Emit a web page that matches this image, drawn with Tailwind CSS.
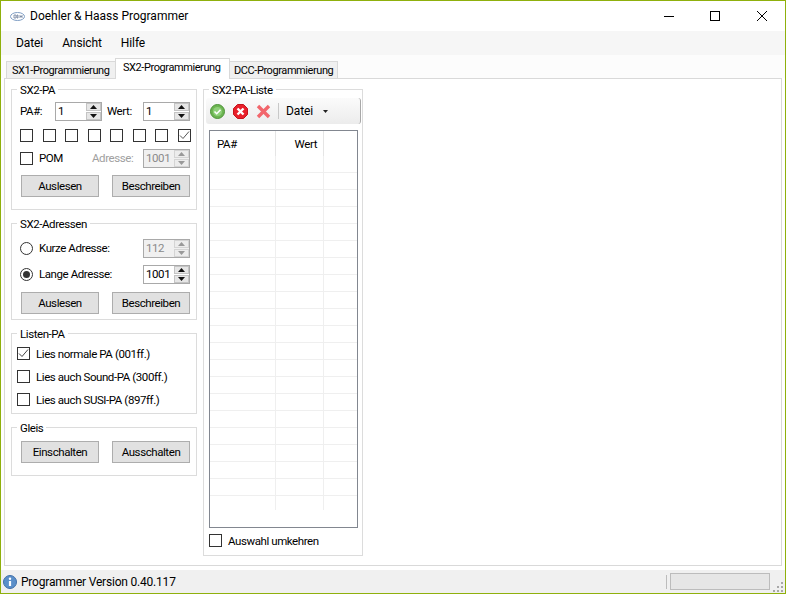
<!DOCTYPE html>
<html lang="en">
<head>
  <meta charset="UTF-8" />
  <title>Doehler &amp; Haass Programmer</title>
  <script src="https://cdn.jsdelivr.net/npm/@tailwindcss/browser@4"></script>
</head>
<body class="bg-white font-['Roboto',sans-serif] text-[11.5px] tracking-[-0.42px] leading-4 text-black">
<div class="w-[786px] h-[594px] border border-[#8fb00c] flex flex-col overflow-hidden bg-white">

  <!-- title bar -->
  <div class="h-[30px] flex items-center shrink-0 pl-[9px]">
    <svg class="w-[15px] h-[9px]" viewBox="0 0 15 9"><ellipse cx="7.5" cy="4.5" rx="7" ry="4" fill="#fff" stroke="#7f9ec4"/><path d="M4 3h2v3H4zM7 3h1v3H7zM10 3v3M12 3v3M10 4.5h2" fill="none" stroke="#6c7f9c" stroke-width=".8"/></svg>
    <span class="ml-[5px] text-[12px] tracking-normal">Doehler &amp; Haass Programmer</span>
    <div class="ml-auto flex items-center">
      <svg class="w-[46px] h-[30px]" viewBox="0 0 46 30"><path d="M18 15.5h10" stroke="#000"/></svg>
      <svg class="w-[46px] h-[30px]" viewBox="0 0 46 30"><rect x="18.5" y="10.5" width="9" height="9" fill="none" stroke="#000"/></svg>
      <svg class="w-[46px] h-[30px] ml-[1px]" viewBox="0 0 46 30"><path d="M18 10l10 10M28 10L18 20" stroke="#000" fill="none"/></svg>
    </div>
  </div>

  <!-- menu -->
  <div class="h-[24px] bg-[#f6f6f6] flex items-center shrink-0 pl-[15px] gap-[19px] text-[12px] tracking-[-0.1px]">
    <span>Datei</span><span>Ansicht</span><span>Hilfe</span>
  </div>

  <!-- tabs -->
  <div class="h-[23px] shrink-0 flex items-end pl-[5px] bg-[#fcfcfc] relative z-10 whitespace-nowrap text-[11px]">
    <div class="w-[110px] h-[17px] bg-[#f0f0f0] border border-b-0 border-[#d9d9d9] pl-[5px] leading-[17px]">SX1-Programmierung</div>
    <div class="w-[115px] h-[21px] bg-white border border-b-0 border-[#d9d9d9] pl-[7px] -mb-px -ml-px leading-[18px]">SX2-Programmierung</div>
    <div class="w-[109px] h-[17px] bg-[#f0f0f0] border border-b-0 border-[#d9d9d9] pl-[4px] -ml-px leading-[17px]">DCC-Programmierung</div>
  </div>

  <!-- tab page -->
  <div class="h-[488px] mx-[3px] mt-0 border border-[#d9d9d9] bg-white flex items-start gap-[6px] pl-[6px] pt-[2px] shrink-0 w-[778px]">

    <div class="w-[186px] flex flex-col gap-[5px]">
      <fieldset class="h-[129px] min-w-0 border border-[#dcdcdc] pl-[8px]">
        <legend class="-ml-[3px] px-[3px] h-4 leading-[18px]">SX2-PA</legend>
        <div class="flex items-center mt-[5px] h-[19px]">
          <span class="w-[35px] -mt-[2px]">PA#:</span>
          <div class="w-[47px] h-[19px] border border-[#a9a9a9] flex justify-between pl-[2px] leading-[17px]">
            <span>1</span>
            <div class="w-[15px] flex flex-col gap-px">
              <div class="h-[8px] bg-[#e6e6e6] border border-[#c4c4c4] flex items-center justify-center"><svg class="w-[7px] h-[4px]" viewBox="0 0 7 4"><path d="M3.5 0L7 4H0z" fill="#111"/></svg></div>
              <div class="h-[8px] bg-[#e6e6e6] border border-[#c4c4c4] flex items-center justify-center"><svg class="w-[7px] h-[4px]" viewBox="0 0 7 4"><path d="M0 0h7L3.5 4z" fill="#111"/></svg></div>
            </div>
          </div>
          <span class="w-[36px] ml-[5px] -mt-[2px]">Wert:</span>
          <div class="w-[47px] h-[19px] border border-[#a9a9a9] flex justify-between pl-[2px] leading-[17px]">
            <span>1</span>
            <div class="w-[15px] flex flex-col gap-px">
              <div class="h-[8px] bg-[#e6e6e6] border border-[#c4c4c4] flex items-center justify-center"><svg class="w-[7px] h-[4px]" viewBox="0 0 7 4"><path d="M3.5 0L7 4H0z" fill="#111"/></svg></div>
              <div class="h-[8px] bg-[#e6e6e6] border border-[#c4c4c4] flex items-center justify-center"><svg class="w-[7px] h-[4px]" viewBox="0 0 7 4"><path d="M0 0h7L3.5 4z" fill="#111"/></svg></div>
            </div>
          </div>
        </div>
        <div class="flex mt-[8px] w-[171px] justify-between">
          <div class="w-[13px] h-[13px] border border-[#333]"></div>
          <div class="w-[13px] h-[13px] border border-[#333]"></div>
          <div class="w-[13px] h-[13px] border border-[#333]"></div>
          <div class="w-[13px] h-[13px] border border-[#333]"></div>
          <div class="w-[13px] h-[13px] border border-[#333]"></div>
          <div class="w-[13px] h-[13px] border border-[#333]"></div>
          <div class="w-[13px] h-[13px] border border-[#333]"></div>
          <div class="w-[13px] h-[13px] border border-[#333]"><svg class="w-[11px] h-[11px]" viewBox="0 0 11 11"><path d="M1 5.5l3 3 6-7" fill="none" stroke="#555"/></svg></div>
        </div>
        <div class="flex items-center mt-[7px] h-[19px]">
          <div class="w-[13px] h-[13px] border border-[#333]"></div>
          <span class="ml-[6px] w-[53px] -mt-[2px]">POM</span>
          <span class="w-[51px] text-[#a0a0a0] -mt-[2px]">Adresse:</span>
          <div class="w-[47px] h-[19px] border border-[#a9a9a9] bg-[#f0f0f0] text-[#8a8a8a] flex justify-between pl-[2px] leading-[17px]">
            <span>1001</span>
            <div class="w-[15px] flex flex-col gap-px">
              <div class="h-[8px] bg-[#ececec] border border-[#d4d4d4] flex items-center justify-center"><svg class="w-[7px] h-[4px]" viewBox="0 0 7 4"><path d="M3.5 0L7 4H0z" fill="#999"/></svg></div>
              <div class="h-[8px] bg-[#ececec] border border-[#d4d4d4] flex items-center justify-center"><svg class="w-[7px] h-[4px]" viewBox="0 0 7 4"><path d="M0 0h7L3.5 4z" fill="#999"/></svg></div>
            </div>
          </div>
        </div>
        <div class="flex ml-px mt-[7px] gap-[13px]">
          <div class="w-[78px] h-[22px] bg-[#e1e1e1] border border-[#adadad] text-center leading-[20px]">Auslesen</div>
          <div class="w-[78px] h-[22px] bg-[#e1e1e1] border border-[#adadad] text-center leading-[20px]">Beschreiben</div>
        </div>
      </fieldset>

      <fieldset class="h-[105px] min-w-0 border border-[#dcdcdc] pl-[8px]">
        <legend class="-ml-[3px] px-[3px] h-4 leading-[18px]">SX2-Adressen</legend>
        <div class="flex items-center mt-[8px] h-[19px]">
          <div class="w-[13px] h-[13px] rounded-full border border-[#333]"></div>
          <span class="ml-[6px] w-[104px] -mt-[1px]">Kurze Adresse:</span>
          <div class="w-[47px] h-[19px] border border-[#a9a9a9] bg-[#f0f0f0] text-[#8a8a8a] flex justify-between pl-[2px] leading-[17px]">
            <span>112</span>
            <div class="w-[15px] flex flex-col gap-px">
              <div class="h-[8px] bg-[#ececec] border border-[#d4d4d4] flex items-center justify-center"><svg class="w-[7px] h-[4px]" viewBox="0 0 7 4"><path d="M3.5 0L7 4H0z" fill="#999"/></svg></div>
              <div class="h-[8px] bg-[#ececec] border border-[#d4d4d4] flex items-center justify-center"><svg class="w-[7px] h-[4px]" viewBox="0 0 7 4"><path d="M0 0h7L3.5 4z" fill="#999"/></svg></div>
            </div>
          </div>
        </div>
        <div class="flex items-center mt-[7px] h-[19px]">
          <div class="w-[13px] h-[13px] rounded-full border border-[#333] flex items-center justify-center"><div class="w-[7px] h-[7px] rounded-full bg-[#333]"></div></div>
          <span class="ml-[6px] w-[104px] -mt-[1px]">Lange Adresse:</span>
          <div class="w-[47px] h-[19px] border border-[#a9a9a9] flex justify-between pl-[2px] leading-[17px]">
            <span>1001</span>
            <div class="w-[15px] flex flex-col gap-px">
              <div class="h-[8px] bg-[#e6e6e6] border border-[#c4c4c4] flex items-center justify-center"><svg class="w-[7px] h-[4px]" viewBox="0 0 7 4"><path d="M3.5 0L7 4H0z" fill="#111"/></svg></div>
              <div class="h-[8px] bg-[#e6e6e6] border border-[#c4c4c4] flex items-center justify-center"><svg class="w-[7px] h-[4px]" viewBox="0 0 7 4"><path d="M0 0h7L3.5 4z" fill="#111"/></svg></div>
            </div>
          </div>
        </div>
        <div class="flex ml-px mt-[8px] gap-[13px]">
          <div class="w-[78px] h-[22px] bg-[#e1e1e1] border border-[#adadad] text-center leading-[20px]">Auslesen</div>
          <div class="w-[78px] h-[22px] bg-[#e1e1e1] border border-[#adadad] text-center leading-[20px]">Beschreiben</div>
        </div>
      </fieldset>

      <fieldset class="h-[89px] min-w-0 border border-[#dcdcdc] pl-[5px]">
        <legend class="ml-0 px-[3px] h-4 leading-[18px]">Listen-PA</legend>
        <div class="flex flex-col gap-[10px] mt-[6px]">
          <div class="flex items-center h-[13px]"><div class="w-[13px] h-[13px] border border-[#333]"><svg class="w-[11px] h-[11px]" viewBox="0 0 11 11"><path d="M1 5.5l3 3 6-7" fill="none" stroke="#444"/></svg></div><span class="ml-[6px]">Lies normale PA (001ff.)</span></div>
          <div class="flex items-center h-[13px]"><div class="w-[13px] h-[13px] border border-[#333]"></div><span class="ml-[6px]">Lies auch Sound-PA (300ff.)</span></div>
          <div class="flex items-center h-[13px]"><div class="w-[13px] h-[13px] border border-[#333]"></div><span class="ml-[6px]">Lies auch SUSI-PA (897ff.)</span></div>
        </div>
      </fieldset>

      <fieldset class="h-[57px] min-w-0 border border-[#dcdcdc] pl-[8px]">
        <legend class="-ml-[3px] px-[3px] h-4 leading-[18px]">Gleis</legend>
        <div class="flex ml-px mt-[6px] gap-[13px]">
          <div class="w-[78px] h-[22px] bg-[#e1e1e1] border border-[#adadad] text-center leading-[20px]">Einschalten</div>
          <div class="w-[78px] h-[22px] bg-[#e1e1e1] border border-[#adadad] text-center leading-[20px]">Ausschalten</div>
        </div>
      </fieldset>
    </div>

    <!-- list -->
    <fieldset class="w-[160px] min-w-0 h-[475px] border border-[#dcdcdc] px-[5px]">
      <legend class="ml-0 px-[3px] h-4 leading-[18px]">SX2-PA-Liste</legend>
      <div class="w-[155px] h-[26px] -ml-[3px] mt-px rounded-[3px] bg-gradient-to-b from-[#fbfbfb] to-[#ececec] border-r border-r-[#a8a8a8] flex items-center pl-[4px]">
        <svg class="w-[15px] h-[15px]" viewBox="0 0 15 15"><circle cx="7.5" cy="7.5" r="7" fill="#6db552" stroke="#4d9438"/><circle cx="7.5" cy="7.5" r="4.5" fill="#8fd07a"/><path d="M4.5 7.5l2.2 2.2 3.8-4" fill="none" stroke="#fff" stroke-width="1.6"/></svg>
        <svg class="w-[15px] h-[15px] ml-[8px]" viewBox="0 0 15 15"><path d="M4.5.5h6l4 4v6l-4 4h-6l-4-4v-6z" fill="#e8202a" stroke="#c4141c"/><path d="M4.5 4.5l6 6M10.5 4.5l-6 6" stroke="#fff" stroke-width="2.4"/></svg>
        <svg class="w-[15px] h-[15px] ml-[8px]" viewBox="0 0 15 15"><path d="M2 2l11 11M13 2L2 13" stroke="#f2666c" stroke-width="3.4"/></svg>
        <div class="w-px h-[16px] bg-[#c8c8c8] ml-[7px]"></div>
        <span class="ml-[7px] text-[12px] tracking-[-0.1px]">Datei</span>
        <svg class="w-[5px] h-[3px] ml-[10px]" viewBox="0 0 5 3"><path d="M0 0h5L2.5 3z" fill="#222"/></svg>
      </div>
      <div class="w-[149px] h-[398px] mt-[6px] border border-[#828790]">
        <div class="flex h-[25px]">
          <div class="w-[66px] h-[25px] border-r border-[#e5e5e5] pl-[7px] pt-[5px]">PA#</div>
          <div class="w-[48px] h-[25px] border-r border-[#e5e5e5] text-right pr-[6px] pt-[5px]">Wert</div>
        </div>
        <div class="h-[16px] flex"><div class="w-[66px] border-r border-[#efefef]"></div><div class="w-[48px] border-r border-[#efefef]"></div></div>
        <div class="h-[17px] flex border-t border-[#efefef]"><div class="w-[66px] border-r border-[#efefef]"></div><div class="w-[48px] border-r border-[#efefef]"></div></div>
        <div class="h-[17px] flex border-t border-[#efefef]"><div class="w-[66px] border-r border-[#efefef]"></div><div class="w-[48px] border-r border-[#efefef]"></div></div>
        <div class="h-[17px] flex border-t border-[#efefef]"><div class="w-[66px] border-r border-[#efefef]"></div><div class="w-[48px] border-r border-[#efefef]"></div></div>
        <div class="h-[17px] flex border-t border-[#efefef]"><div class="w-[66px] border-r border-[#efefef]"></div><div class="w-[48px] border-r border-[#efefef]"></div></div>
        <div class="h-[17px] flex border-t border-[#efefef]"><div class="w-[66px] border-r border-[#efefef]"></div><div class="w-[48px] border-r border-[#efefef]"></div></div>
        <div class="h-[17px] flex border-t border-[#efefef]"><div class="w-[66px] border-r border-[#efefef]"></div><div class="w-[48px] border-r border-[#efefef]"></div></div>
        <div class="h-[17px] flex border-t border-[#efefef]"><div class="w-[66px] border-r border-[#efefef]"></div><div class="w-[48px] border-r border-[#efefef]"></div></div>
        <div class="h-[17px] flex border-t border-[#efefef]"><div class="w-[66px] border-r border-[#efefef]"></div><div class="w-[48px] border-r border-[#efefef]"></div></div>
        <div class="h-[17px] flex border-t border-[#efefef]"><div class="w-[66px] border-r border-[#efefef]"></div><div class="w-[48px] border-r border-[#efefef]"></div></div>
        <div class="h-[17px] flex border-t border-[#efefef]"><div class="w-[66px] border-r border-[#efefef]"></div><div class="w-[48px] border-r border-[#efefef]"></div></div>
        <div class="h-[17px] flex border-t border-[#efefef]"><div class="w-[66px] border-r border-[#efefef]"></div><div class="w-[48px] border-r border-[#efefef]"></div></div>
        <div class="h-[17px] flex border-t border-[#efefef]"><div class="w-[66px] border-r border-[#efefef]"></div><div class="w-[48px] border-r border-[#efefef]"></div></div>
        <div class="h-[17px] flex border-t border-[#efefef]"><div class="w-[66px] border-r border-[#efefef]"></div><div class="w-[48px] border-r border-[#efefef]"></div></div>
        <div class="h-[17px] flex border-t border-[#efefef]"><div class="w-[66px] border-r border-[#efefef]"></div><div class="w-[48px] border-r border-[#efefef]"></div></div>
        <div class="h-[17px] flex border-t border-[#efefef]"><div class="w-[66px] border-r border-[#efefef]"></div><div class="w-[48px] border-r border-[#efefef]"></div></div>
        <div class="h-[17px] flex border-t border-[#efefef]"><div class="w-[66px] border-r border-[#efefef]"></div><div class="w-[48px] border-r border-[#efefef]"></div></div>
        <div class="h-[17px] flex border-t border-[#efefef]"><div class="w-[66px] border-r border-[#efefef]"></div><div class="w-[48px] border-r border-[#efefef]"></div></div>
        <div class="h-[17px] flex border-t border-[#efefef]"><div class="w-[66px] border-r border-[#efefef]"></div><div class="w-[48px] border-r border-[#efefef]"></div></div>
        <div class="h-[17px] flex border-t border-[#efefef]"><div class="w-[66px] border-r border-[#efefef]"></div><div class="w-[48px] border-r border-[#efefef]"></div></div>
        <div class="h-[15px] flex border-t border-[#efefef]"><div class="w-[66px] border-r border-[#efefef]"></div><div class="w-[48px] border-r border-[#efefef]"></div></div>
      </div>
      <div class="flex items-center h-[13px] mt-[6px]">
        <div class="w-[13px] h-[13px] border border-[#333]"></div>
        <span class="ml-[6px]">Auswahl umkehren</span>
      </div>
    </fieldset>
  </div>

  <!-- status bar -->
  <div class="flex-1 mt-[4px] bg-[#f0f0f0] flex items-center pl-[2px] relative">
    <svg class="w-[14px] h-[14px]" viewBox="0 0 14 14"><circle cx="7" cy="7" r="6.5" fill="#5b8fc9" stroke="#3f6ea8"/><circle cx="7" cy="3.8" r="1.2" fill="#fff"/><path d="M7 6v5" stroke="#fff" stroke-width="2.2"/></svg>
    <span class="ml-[4px] text-[12px] tracking-[-0.2px]">Programmer Version 0.40.117</span>
    <div class="ml-auto w-px h-[14px] bg-[#bcbcbc]"></div>
    <div class="w-[100px] h-[17px] ml-[3px] bg-[#e6e6e6] border border-[#bcbcbc] mr-[15px]"></div>
    <svg class="absolute right-0 bottom-0 w-[13px] h-[12px]" viewBox="0 0 13 12"><path d="M9 1h2v2H9zM5 5h2v2H5zM9 5h2v2H9zM1 9h2v2H1zM5 9h2v2H5zM9 9h2v2H9z" fill="#a8a8a8"/></svg>
  </div>
</div>
</body>
</html>
